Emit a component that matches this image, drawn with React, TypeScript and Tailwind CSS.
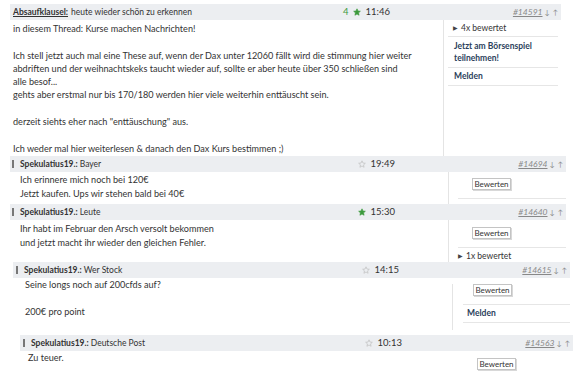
import React from 'react';

const Star = ({ filled }: { filled: boolean }) => (
  <svg width="8" height="8" viewBox="0 0 24 24" className="shrink-0">
    <path
      d="M12 2.5l2.9 6.6 7.1.7-5.4 4.8 1.6 7.1L12 18l-6.2 3.7 1.6-7.1L2 9.8l7.1-.7z"
      fill={filled ? '#3d9a3d' : 'none'}
      stroke={filled ? '#3d9a3d' : '#bdbdbd'}
      strokeWidth="2"
    />
  </svg>
);

interface HeaderProps {
  author: string;
  title: string;
  time: string;
  num: string;
  filled?: boolean;
  score?: string;
  bar?: boolean;
  first?: boolean;
  pad: string;
}

const Header = ({ author, title, time, num, filled = false, score, bar = true, first = false, pad }: HeaderProps) => (
  <div className={`flex h-[16px] items-center bg-[#eceef1] ${pad}`}>
    <div className="flex flex-1 items-center text-[8.5px] leading-none text-[#333]">
      {bar && <span className="mr-[6px] h-[8px] w-[2px] bg-[#777]" />}
      <span className={first ? 'font-bold underline' : 'font-bold'}>{author}</span>
      <span className={first ? 'ml-[3px]' : 'ml-[2px]'}>{title}</span>
    </div>
    <div className="mr-[53px] flex items-center gap-[4px] text-[9.5px] leading-none text-[#333]">
      {score && <span className="text-[#3d9a3d]">{score}</span>}
      <Star filled={filled} />
      <span className="ml-[1px]">{time}</span>
    </div>
    <div className="flex w-[118px] items-center justify-end pr-[3px] text-[8.5px] leading-none text-[#888]">
      <span className="italic underline">{num}</span>
      <span className="ml-[2px] text-[7px]">↓</span>
      <span className="ml-[3px] text-[7px]">↑</span>
    </div>
  </div>
);

const Bewerten = ({ cls }: { cls: string }) => (
  <div
    className={`flex h-[12px] w-[39px] items-center justify-center border border-[#c4c4c4] bg-white text-[8px] leading-none text-[#333] shadow-[1px_1px_0_#d8d8d8] ${cls}`}
  >
    Bewerten
  </div>
);

const Rated = ({ n, cls }: { n: string; cls: string }) => (
  <div className={`flex items-center text-[8.5px] leading-none text-[#333] ${cls}`}>
    <span className="mr-[3px] text-[6px] text-[#444]">▶</span>
    {n}x bewertet
  </div>
);

export default function App() {
  return (
    <div className="relative h-[376px] w-[584px] overflow-hidden bg-white font-['Lato',sans-serif] text-[#333]">
      {/* thread start */}
      <div className="ml-[10px] mt-[4px] w-[551px]">
        <Header
          first
          bar={false}
          pad="pl-[3px]"
          author="Absaufklausel:"
          title="heute wieder schön zu erkennen"
          score="4"
          filled
          time="11:46"
          num="#14591"
        />
        <div className="flex h-[136px]">
          <div className="flex-1 pl-[3px] pt-[2px] text-[9.1px] leading-[13.3px]">
            in diesem Thread: Kurse machen Nachrichten!
            <br />
            <br />
            Ich stell jetzt auch mal eine These auf, wenn der Dax unter 12060 fällt wird die stimmung hier weiter
            <br />
            abdriften und der weihnachtskeks taucht wieder auf, sollte er aber heute über 350 schließen sind
            <br />
            alle besof...
            <br />
            gehts aber erstmal nur bis 170/180 werden hier viele weiterhin enttäuscht sein.
            <br />
            <br />
            derzeit siehts eher nach "enttäuschung" aus.
            <br />
            <br />
            Ich weder mal hier weiterlesen &amp; danach den Dax Kurs bestimmen ;)
          </div>
          <div className="w-[118px] border-l border-[#e4e4e4]">
            <div className="ml-[4px] mr-[3px]">
              <Rated n="4" cls="h-[17px] border-b border-[#e6e6e6] pl-[5px]" />
              <div className="border-b border-[#e6e6e6] py-[3px] pl-[6px] text-[8.5px] font-bold leading-[12px] text-[#2b3f5c]">
                Jetzt am Börsenspiel
                <br />
                teilnehmen!
              </div>
              <div className="flex h-[18px] items-center border-b border-[#e6e6e6] pl-[6px] text-[8.5px] font-bold leading-none text-[#2b3f5c]">
                Melden
              </div>
            </div>
          </div>
        </div>
      </div>

      {/* Bayer */}
      <div className="ml-[10px] w-[556px]">
        <Header pad="pl-[2px]" author="Spekulatius19.:" title="Bayer" time="19:49" num="#14694" />
        <div className="flex h-[32px]">
          <div className="flex-1 pl-[10px] pt-[1px] text-[9.1px] leading-[14px]">
            Ich erinnere mich noch bei 120€
            <br />
            Jetzt kaufen. Ups wir stehen bald bei 40€
          </div>
          <div className="w-[118px] border-l border-[#e4e4e4]">
            <Bewerten cls="ml-[23px] mt-[6px]" />
            <div className="ml-[9px] mt-[8px] border-b border-[#e6e6e6]" />
          </div>
        </div>
      </div>

      {/* Leute */}
      <div className="ml-[10px] w-[556px]">
        <Header pad="pl-[2px]" author="Spekulatius19.:" title="Leute" filled time="15:30" num="#14640" />
        <div className="flex h-[42px]">
          <div className="flex-1 pl-[10px] pt-[2px] text-[9.1px] leading-[14px]">
            Ihr habt im Februar den Arsch versolt bekommen
            <br />
            und jetzt macht ihr wieder den gleichen Fehler.
          </div>
          <div className="w-[118px] border-l border-[#e4e4e4]">
            <Bewerten cls="ml-[23px] mt-[7px]" />
            <div className="ml-[9px] mt-[8px] border-b border-[#e6e6e6]" />
            <Rated n="1" cls="ml-[9px] mt-[4px]" />
          </div>
        </div>
      </div>

      {/* Wer Stock */}
      <div className="ml-[13px] w-[557px]">
        <Header pad="pl-[3px]" author="Spekulatius19.:" title="Wer Stock" time="14:15" num="#14615" />
        <div className="flex h-[57px]">
          <div className="flex-1 pl-[12px] pt-[0px] text-[9.1px] leading-[13.5px]">
            Seine longs noch auf 200cfds auf?
            <br />
            <br />
            200€ pro point
          </div>
          <div className="w-[118px]">
            <div className="h-[46px] border-l border-[#e4e4e4]">
              <Bewerten cls="ml-[20px] mt-[6px]" />
              <div className="ml-[10px] mt-[8px] border-b border-[#e6e6e6]" />
              <div className="ml-[10px] flex h-[18px] items-center border-b border-[#e6e6e6] pl-[4px] text-[8.5px] font-bold leading-none text-[#2b3f5c]">
                Melden
              </div>
            </div>
          </div>
        </div>
      </div>

      {/* Deutsche Post */}
      <div className="ml-[20px] w-[553px]">
        <Header pad="pl-[3px]" author="Spekulatius19.:" title="Deutsche Post" time="10:13" num="#14563" />
        <div className="flex h-[40px]">
          <div className="flex-1 pl-[8px] pt-[0px] text-[9.1px] leading-[14px]">Zu teuer.</div>
          <div className="w-[118px]">
            <Bewerten cls="ml-[22px] mt-[7px]" />
            <div className="ml-[9px] mt-[8px] border-b border-[#e6e6e6]" />
          </div>
        </div>
      </div>
    </div>
  );
}
